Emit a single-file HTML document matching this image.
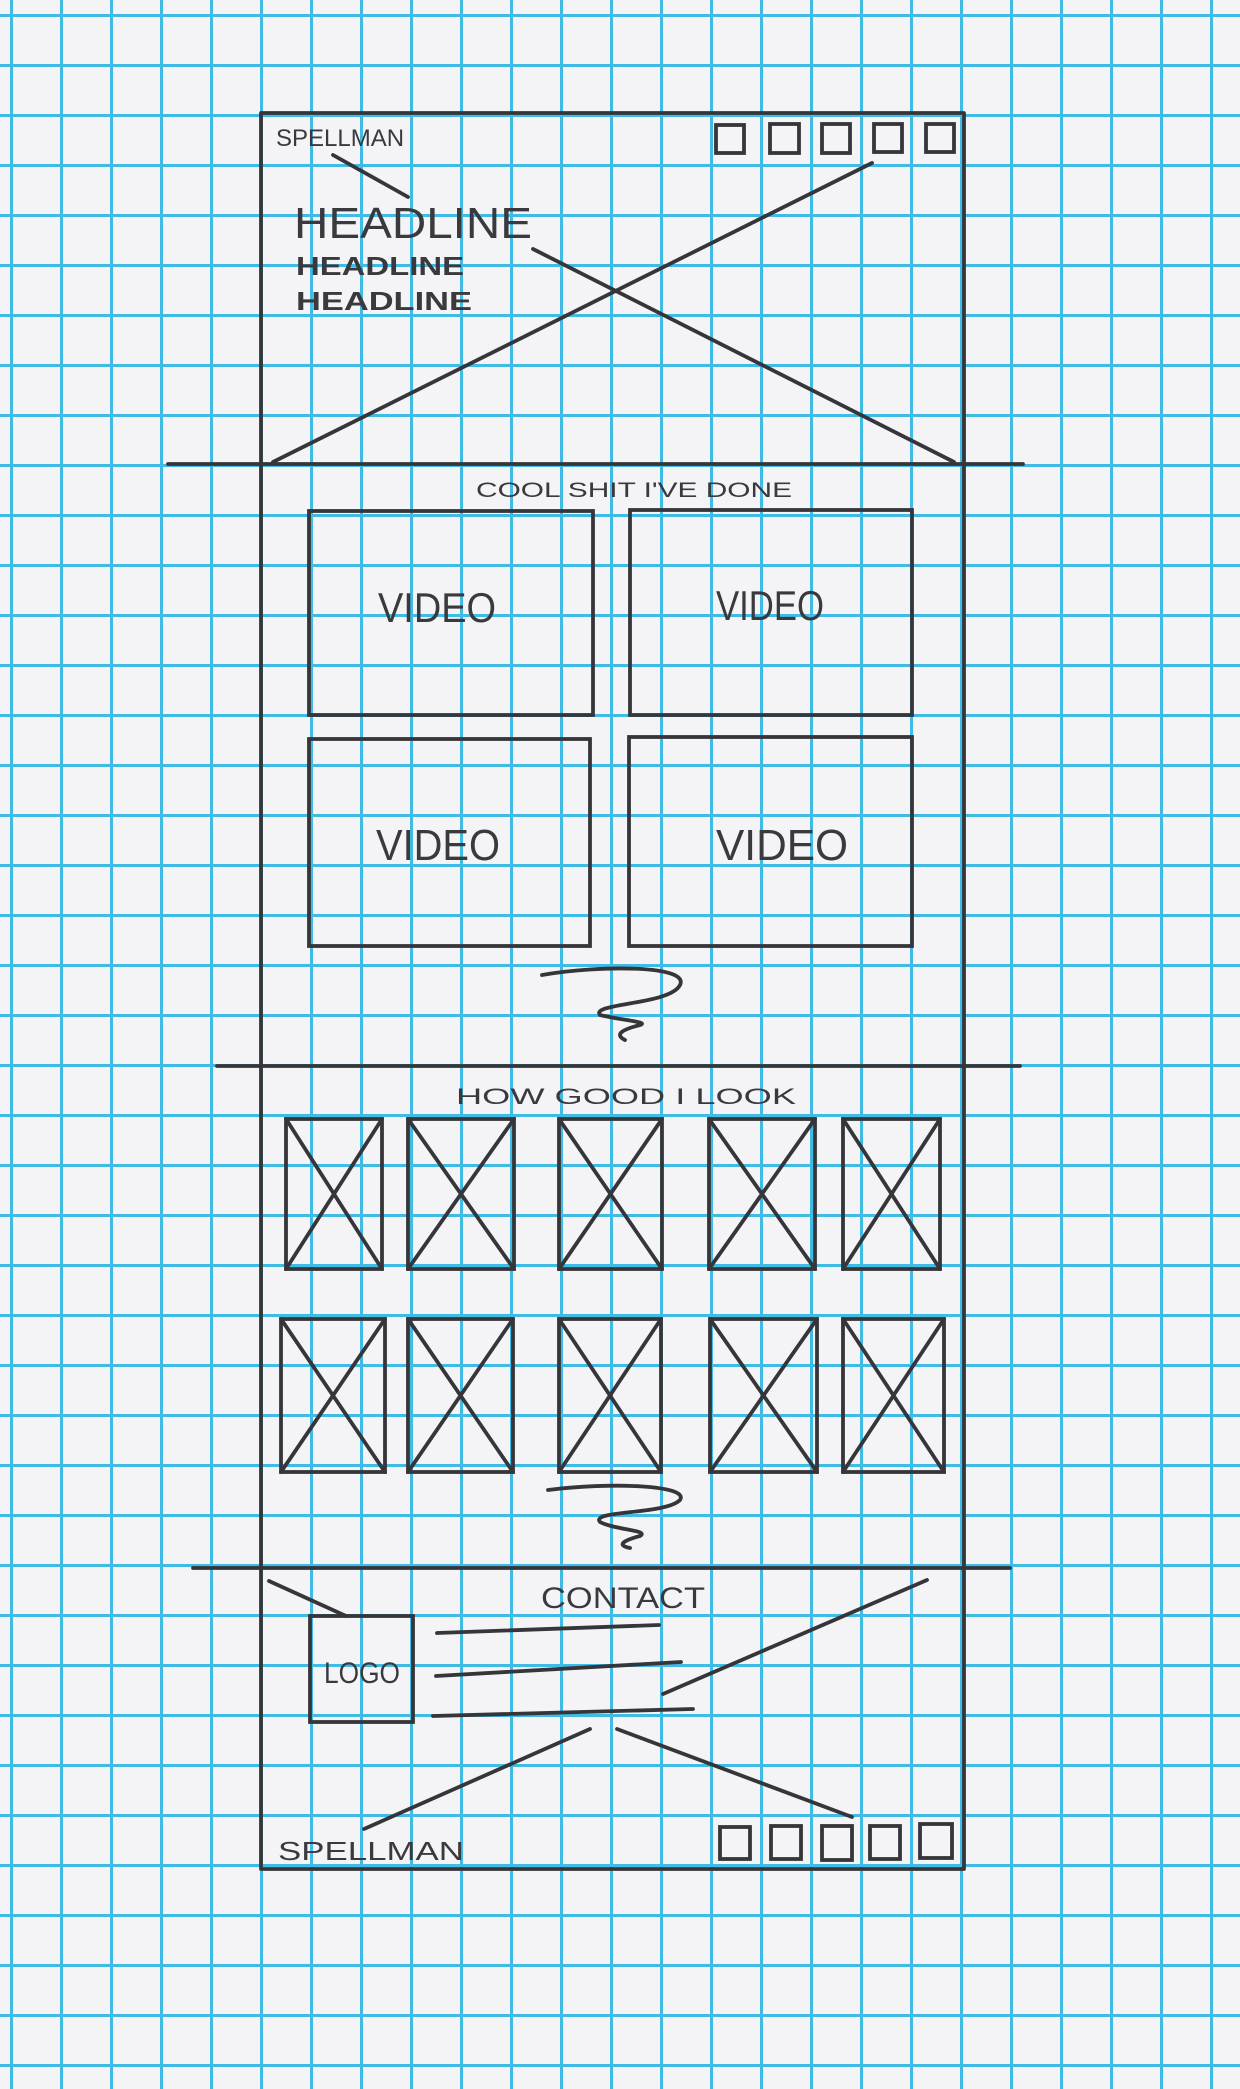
<!DOCTYPE html>
<html><head><meta charset="utf-8"><style>
html,body{margin:0;padding:0;background:#f4f4f6;}
svg{display:block}
text{font-family:"Liberation Sans",sans-serif;fill:#3a3a3e;}
</style></head><body>
<svg width="1240" height="2089" viewBox="0 0 1240 2089" xmlns="http://www.w3.org/2000/svg">
<defs>
<pattern id="g" x="10" y="14" width="50" height="50" patternUnits="userSpaceOnUse">
<path d="M1.5 0V50M0 1.5H50" stroke="#3fbbe6" stroke-width="3" fill="none"/>
</pattern>
</defs>
<rect width="1240" height="2089" fill="#f4f4f6"/>
<rect width="1240" height="2089" fill="url(#g)"/>
<g stroke="#36363a" stroke-width="3.8" fill="none" stroke-linecap="round">
<path d="M261 113H964M261 113V1869M964 113V1869M261 1869H964"/>
<path d="M168 464H1023M217 1066H1020M193 1568H1010"/>
<rect x="716" y="125" width="28" height="28"/><rect x="770" y="124" width="29" height="29"/><rect x="822" y="124" width="28" height="29"/><rect x="874" y="124" width="28" height="28"/><rect x="926" y="124" width="28" height="28"/>
<path d="M273 462L872 163M533 249L954 462M333 155L408 197"/>
<rect x="309" y="511" width="284" height="204"/><rect x="630" y="510" width="282" height="205"/>
<rect x="309" y="739" width="281" height="207"/><rect x="629" y="737" width="283" height="209"/>
<path d="M542 975C600 965 690 965 680 985C670 1005 590 1003 600 1015C620 1020 650 1022 640 1025C620 1030 615 1035 625 1040"/>
<g>
<rect x="286" y="1119" width="96" height="150"/><path d="M286 1119L382 1269M382 1119L286 1269"/>
<rect x="408" y="1119" width="106" height="150"/><path d="M408 1119L514 1269M514 1119L408 1269"/>
<rect x="559" y="1119" width="103" height="150"/><path d="M559 1119L662 1269M662 1119L559 1269"/>
<rect x="709" y="1119" width="106" height="150"/><path d="M709 1119L815 1269M815 1119L709 1269"/>
<rect x="843" y="1119" width="97" height="150"/><path d="M843 1119L940 1269M940 1119L843 1269"/>
<rect x="281" y="1319" width="104" height="153"/><path d="M281 1319L385 1472M385 1319L281 1472"/>
<rect x="408" y="1319" width="105" height="153"/><path d="M408 1319L513 1472M513 1319L408 1472"/>
<rect x="559" y="1319" width="102" height="153"/><path d="M559 1319L661 1472M661 1319L559 1472"/>
<rect x="710" y="1319" width="107" height="153"/><path d="M710 1319L817 1472M817 1319L710 1472"/>
<rect x="843" y="1319" width="101" height="153"/><path d="M843 1319L944 1472M944 1319L843 1472"/>
</g>
<path d="M548 1490C610 1482 690 1485 680 1500C665 1515 590 1510 600 1522C615 1530 650 1530 640 1536C625 1540 615 1545 630 1548"/>
<rect x="310" y="1616" width="103" height="106"/>
<path d="M437 1633L659 1625M436 1676L681 1662M433 1716L693 1709M663 1694L927 1580M590 1729L364 1829M617 1729L852 1817M269 1581L346 1616"/>
<rect x="720" y="1827" width="30" height="32"/><rect x="771" y="1826" width="30" height="33"/><rect x="822" y="1826" width="30" height="34"/><rect x="870" y="1826" width="30" height="33"/><rect x="920" y="1824" width="32" height="34"/>
</g>
<text x="276" y="146" font-size="24">SPELLMAN</text>
<text x="294" y="238" font-size="44" textLength="238" lengthAdjust="spacingAndGlyphs">HEADLINE</text>
<text x="296" y="275" font-size="26" font-weight="bold" textLength="168" lengthAdjust="spacingAndGlyphs">HEADLINE</text>
<text x="296" y="310" font-size="26" font-weight="bold" textLength="176" lengthAdjust="spacingAndGlyphs">HEADLINE</text>
<text x="476" y="497" font-size="21" textLength="316" lengthAdjust="spacingAndGlyphs">COOL SHIT I'VE DONE</text>
<text x="378" y="622" font-size="42" textLength="118" lengthAdjust="spacingAndGlyphs">VIDEO</text>
<text x="716" y="620" font-size="42" textLength="108" lengthAdjust="spacingAndGlyphs">VIDEO</text>
<text x="376" y="860" font-size="44" textLength="124" lengthAdjust="spacingAndGlyphs">VIDEO</text>
<text x="716" y="860" font-size="44" textLength="132" lengthAdjust="spacingAndGlyphs">VIDEO</text>
<text x="456" y="1104" font-size="22" textLength="340" lengthAdjust="spacingAndGlyphs">HOW GOOD I LOOK</text>
<text x="541" y="1608" font-size="30" textLength="164" lengthAdjust="spacingAndGlyphs">CONTACT</text>
<text x="324" y="1683" font-size="30" textLength="76" lengthAdjust="spacingAndGlyphs">LOGO</text>
<text x="278" y="1860" font-size="26" textLength="186" lengthAdjust="spacingAndGlyphs">SPELLMAN</text>
</svg>
</body></html>
